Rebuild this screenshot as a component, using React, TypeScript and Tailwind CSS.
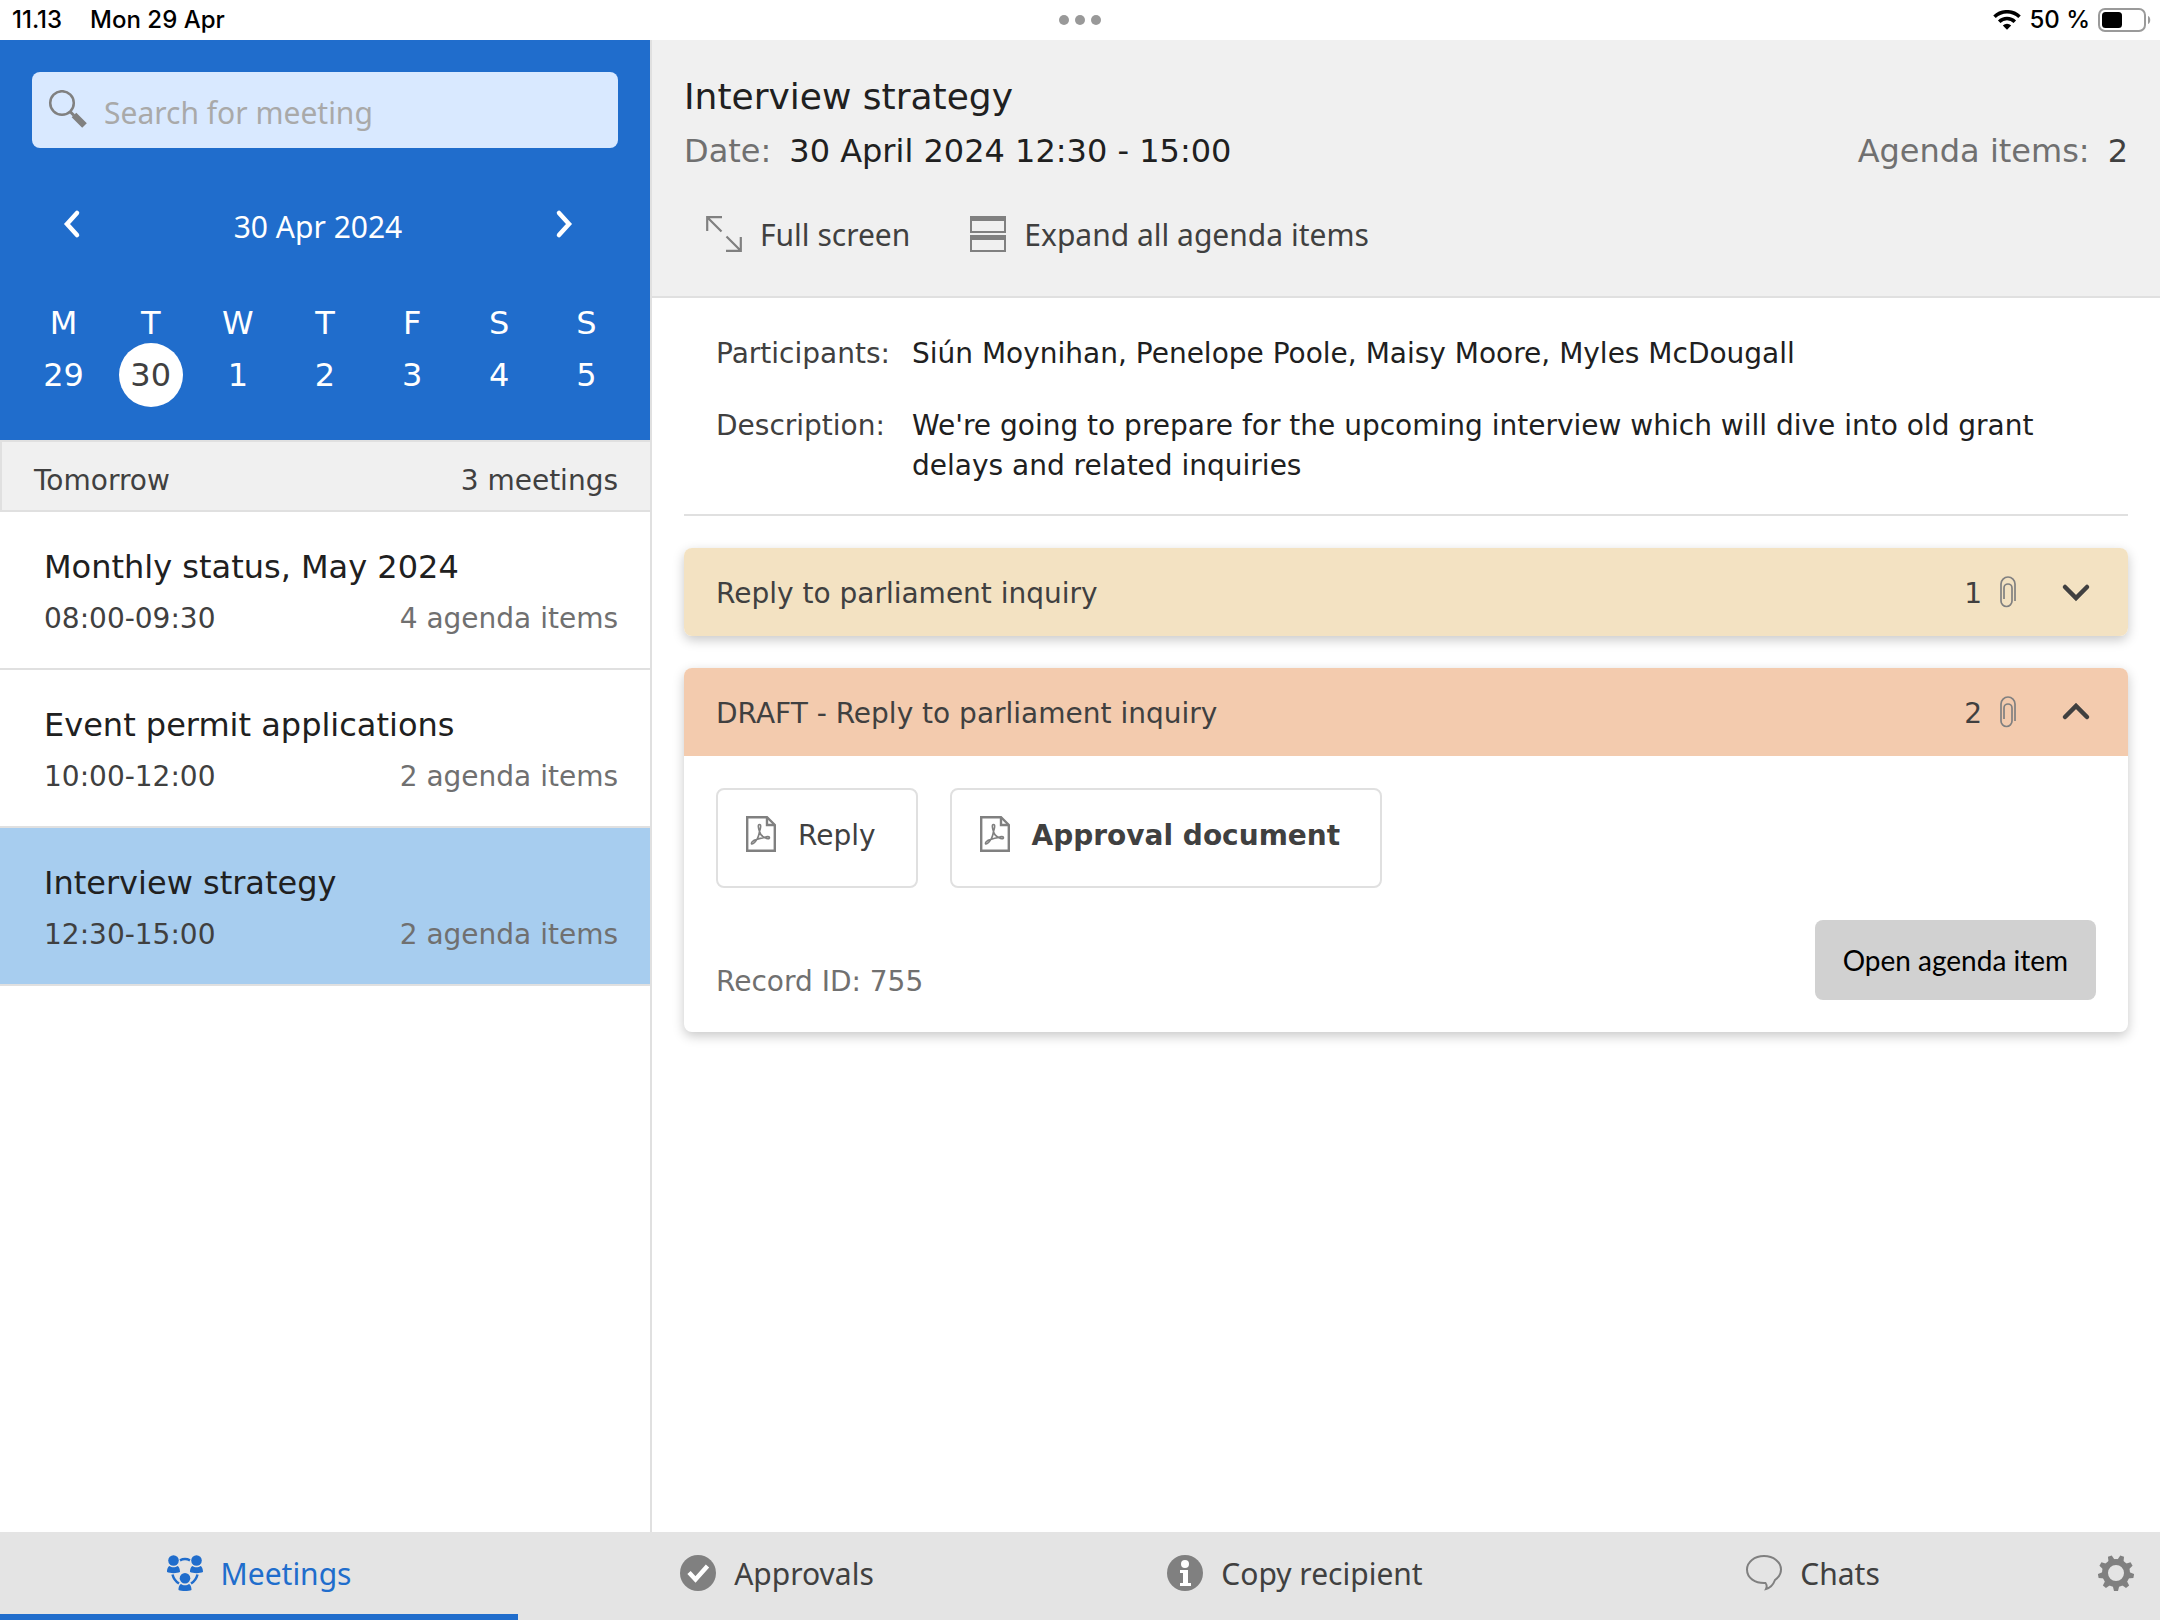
import { ReactNode, useState } from 'react';
import clsx from 'clsx';

const days = [
  { letter: 'M', date: 29 },
  { letter: 'T', date: 30 },
  { letter: 'W', date: 1 },
  { letter: 'T', date: 2 },
  { letter: 'F', date: 3 },
  { letter: 'S', date: 4 },
  { letter: 'S', date: 5 },
];

const meetings = [
  { title: 'Monthly status, May 2024', time: '08:00-09:30', items: 4 },
  { title: 'Event permit applications', time: '10:00-12:00', items: 2 },
  { title: 'Interview strategy', time: '12:30-15:00', items: 2 },
];

const SearchIcon = () => (
  <svg className="h-10 w-10" viewBox="0 0 40 40" fill="none">
    <circle cx="14" cy="13" r="11.800" stroke="#808080" strokeWidth="2.500" />
    <path d="M22 21.500l4 4" stroke="#808080" strokeWidth="3" />
    <path d="M26 25l10.500 10.500" stroke="#808080" strokeWidth="6.500" />
  </svg>
);

const Chevron = ({ d, className }: { d: string; className?: string }) => (
  <svg className={clsx('h-8 w-8', className)} viewBox="0 0 32 32" fill="none">
    <path d={d} stroke="currentColor" strokeWidth="4.500" strokeLinecap="round" />
  </svg>
);

const WifiIcon = () => (
  <svg className="h-5 w-7" viewBox="0 0 28 20" fill="none" stroke="#000">
    <path d="M1.500 6.800a18 18 0 0 1 25 0" strokeWidth="3.600" />
    <path d="M6.200 11.700a11.200 11.200 0 0 1 15.600 0" strokeWidth="3.600" />
    <path d="M9.800 15.500a6 6 0 0 1 8.400 0L14 19.800z" fill="#000" stroke="none" />
  </svg>
);

const BatteryIcon = () => (
  <svg className="h-6 w-[54px]" viewBox="0 0 54 24" fill="none">
    <rect x="1" y="1" width="46" height="22" rx="6" stroke="#9a9a9a" strokeWidth="2" />
    <rect x="4" y="4" width="20" height="16" rx="3.500" fill="#000" />
    <path d="M50 8c3 1 3 7 0 8z" fill="#9a9a9a" />
  </svg>
);

const FullScreenIcon = () => (
  <svg className="size-9" viewBox="0 0 36 36" fill="none" stroke="#808080" strokeWidth="2.200">
    <path d="M16 1.200H1.200V15M1.500 1.500l14 14M20 34.800h14.800V21M34.500 34.500l-14-14" />
  </svg>
);

const ExpandIcon = () => (
  <svg className="size-9" viewBox="0 0 36 36" fill="none">
    <path d="M1 1h34v15H1zM1 20h34v15H1z" stroke="#808080" strokeWidth="2" />
    <path d="M0 0h36v5H0zM0 19h36v5H0z" fill="#808080" />
  </svg>
);

const PdfIcon = () => (
  <svg className="h-9 w-[30px]" viewBox="0 0 30 36" fill="none" stroke="#808080">
    <path d="M1.200 1.200h19.800l7.800 7.800v25.800H1.200z" strokeWidth="2.400" />
    <path d="M21 1.200v7.800h7.800" strokeWidth="2.400" />
    <path
      d="M13.500 15.500c-1-3-2-7 0-7s1 4 0 7c-.5 3-1 6-3 8.500-1.500 2-3.500 4.500-4.800 4-1-.5 1-4 4.800-4.500 3-1.200 6-1.800 8.500-2 2-1.500 4.500-1 4.500.3s-2.500 1.200-4.500-.3c-3-1-5-3.500-5.500-6z"
      strokeWidth="1.600"
    />
  </svg>
);

const ClipIcon = () => (
  <svg className="h-8 w-4" viewBox="0 0 16 32" fill="none" stroke="#808080" strokeWidth="1.700">
    <path d="M15 25V8a7 7 0 0 0-14 0v17a5.500 5.500 0 0 0 11 0V12a4 4 0 0 0-8 0v11" />
  </svg>
);

const MeetingsIcon = () => (
  <svg className="size-9" viewBox="0 0 36 36" fill="currentColor">
    <circle cx="6.500" cy="5.500" r="5.300" />
    <circle cx="29.500" cy="5.500" r="5.300" />
    <circle cx="18" cy="23.300" r="5.300" />
    <path d="M0 17c0-4 1.500-5.500 2.500-6 2 1.800 6 1.800 8 0 1 .5 2.500 2 2.500 6-3 1.500-10 1.500-13 0zM23 17c0-4 1.500-5.500 2.500-6 2 1.800 6 1.800 8 0 1 .5 2.500 2 2.500 6-3 1.500-10 1.500-13 0zM11.500 35c0-4 1.500-5.500 2.500-6 2 1.800 6 1.800 8 0 1 .5 2.500 2 2.500 6-3 1.300-10 1.300-13 0z" />
    <path
      d="M13 5.300q5-2.500 10 0M5.500 19.500q1.500 6 6.500 9M30.500 19.500q-1.500 6-6.500 9"
      fill="none"
      stroke="currentColor"
      strokeWidth="2.500"
    />
  </svg>
);

const ApprovalsIcon = () => (
  <svg className="size-9" viewBox="0 0 36 36">
    <circle cx="18" cy="18" r="18" fill="#808080" />
    <path d="M9 17.500l6.500 7L27.500 11" fill="none" stroke="#fff" strokeWidth="4.500" />
  </svg>
);

const InfoIcon = () => (
  <svg className="size-9" viewBox="0 0 36 36">
    <circle cx="18" cy="18" r="18" fill="#808080" />
    <circle cx="18" cy="9" r="4" fill="#fff" />
    <path d="M13 15h8v13h3v3H13v-3h3V18h-3z" fill="#fff" />
  </svg>
);

const ChatIcon = () => (
  <svg className="size-9" viewBox="0 0 36 36" fill="none" stroke="#808080" strokeWidth="2">
    <path d="M20 34c1-2 1-4-.5-6C9 28.500 1 23 1 14.500 1 7 8.500 1 18 1s17 6 17 13.500c0 5-2.500 8-6 10.500-1.500 4-5 8-9 9z" />
  </svg>
);

const GearIcon = () => (
  <svg className="size-9" viewBox="0 0 36 36" fill="none" stroke="#808080">
    <circle cx="18" cy="18" r="11" strokeWidth="6" />
    {[0, 40, 80, 120, 160, 200, 240, 280, 320].map((angle) => (
      <path
        key={angle}
        d="M14.500 30h7l-1.500 6h-4z"
        fill="#808080"
        stroke="none"
        transform={`rotate(${angle} 18 18)`}
      />
    ))}
  </svg>
);

const tabs = [
  { label: 'Meetings', icon: <MeetingsIcon /> },
  { label: 'Approvals', icon: <ApprovalsIcon /> },
  { label: 'Copy recipient', icon: <InfoIcon /> },
  { label: 'Chats', icon: <ChatIcon /> },
];

const StatusBar = () => (
  <div className="grid h-10 grid-cols-3 items-center bg-white font-['Inter',sans-serif] text-2xl font-medium text-black">
    <div className="flex gap-7 pl-3">
      <span>11.13</span>
      <span>Mon 29 Apr</span>
    </div>
    <div className="flex justify-center gap-1.5">
      <span className="size-2.5 rounded-full bg-[#999]" />
      <span className="size-2.5 rounded-full bg-[#999]" />
      <span className="size-2.5 rounded-full bg-[#999]" />
    </div>
    <div className="flex items-center justify-end gap-2 pr-2">
      <WifiIcon />
      <span>50 %</span>
      <BatteryIcon />
    </div>
  </div>
);

const Sidebar = () => {
  const [day, setDay] = useState(30);
  const [selected, setSelected] = useState(2);

  return (
    <aside className="w-[652px] shrink-0 border-r-2 border-[#e0e0e0]">
      <div className="h-[400px] bg-[#206dcc] pt-8 font-['Noto_Sans',sans-serif] text-white">
        <label className="mx-8 flex h-[76px] items-center gap-4 rounded-lg bg-[#d9e9ff] px-4">
          <SearchIcon />
          <input
            type="text"
            aria-label="Search for meeting"
            placeholder="Search for meeting"
            className="min-w-0 flex-1 bg-transparent pt-1 text-[30px] text-[#404040] outline-none placeholder:text-[#a9a9a9]"
          />
        </label>
        <div className="mt-12 flex h-14 items-center justify-between pr-[70px] pl-14 text-[30px]">
          <button aria-label="Previous day">
            <Chevron d="M21 5L11 16l10 11" />
          </button>
          <span className="pt-1">30 Apr 2024</span>
          <button aria-label="Next day">
            <Chevron d="M11 5l10 11-10 11" />
          </button>
        </div>
        <div className="mt-[51px] grid grid-cols-7 px-5 font-['DejaVu_Sans',sans-serif] text-[32px] leading-10">
          {days.map(({ letter, date }) => (
            <button key={date} onClick={() => setDay(date)} className="flex flex-col items-center">
              <span>{letter}</span>
              <span
                className={clsx(
                  'flex size-16 items-center justify-center rounded-full',
                  day === date && 'bg-white text-[#404040]',
                )}
              >
                {date}
              </span>
            </button>
          ))}
        </div>
      </div>
      <div className="flex h-[72px] items-center justify-between border-2 border-r-0 border-[#e0e0e0] bg-[#f0f0f0] px-8 pt-2.5 text-[28px] text-[#404040]">
        <span>Tomorrow</span>
        <span>3 meetings</span>
      </div>
      <ul>
        {meetings.map(({ title, time, items }, i) => (
          <li key={title}>
            <button
              onClick={() => setSelected(i)}
              className={clsx(
                'flex h-[158px] w-full flex-col border-b-2 border-[#e0e0e0] pt-7 pr-8 pl-11 text-left',
                selected === i && 'bg-[#a7cdef]',
              )}
            >
              <span className="text-[32px] leading-[54px] text-[#202020]">{title}</span>
              <span className="flex w-full justify-between text-[28px] leading-[50px]">
                <span className="text-[#404040]">{time}</span>
                <span className="text-[#707070]">{items} agenda items</span>
              </span>
            </button>
          </li>
        ))}
      </ul>
    </aside>
  );
};

const AgendaCard = ({
  title,
  count,
  open,
  color,
  children,
}: {
  title: string;
  count: number;
  open?: boolean;
  color: string;
  children?: ReactNode;
}) => (
  <section className="mt-8 overflow-hidden rounded-lg bg-white shadow-[0_4px_12px_rgba(0,0,0,0.22)]">
    <button className={clsx('flex h-[88px] w-full items-center pr-9 pl-8 text-[28px] text-[#404040]', color)}>
      <span className="pt-1">{title}</span>
      <span className="mr-[18px] ml-auto pt-1">{count}</span>
      <ClipIcon />
      <Chevron className="ml-11" d={open ? 'M5 21l11-11 11 11' : 'M5 11l11 11 11-11'} />
    </button>
    {children}
  </section>
);

const DocumentButton = ({ label, bold }: { label: string; bold?: boolean }) => (
  <button
    className={clsx(
      'flex h-[100px] items-center gap-[22px] rounded-lg border-2 border-[#e0e0e0] pr-10 pb-2 pl-7 text-[#404040]',
      bold && 'font-bold',
    )}
  >
    <PdfIcon />
    <span className="pt-1">{label}</span>
  </button>
);

const MeetingDetails = () => (
  <main className="min-w-0 flex-1">
    <header className="h-[258px] border-b-2 border-[#e0e0e0] bg-[#f0f0f0] px-8 pt-7">
      <h1 className="text-[36px] leading-[58px] text-[#202020]">Interview strategy</h1>
      <div className="flex justify-between text-[32px] leading-[50px] text-[#707070]">
        <div className="flex gap-[18px]">
          <span>Date:</span>
          <span className="text-[#202020]">30 April 2024 12:30 - 15:00</span>
        </div>
        <div className="flex gap-[18px]">
          <span>Agenda items:</span>
          <span className="text-[#404040]">2</span>
        </div>
      </div>
      <div className="mt-[30px] flex h-14 items-center gap-[60px] px-[22px] font-['Noto_Sans',sans-serif] text-[30px] text-[#404040]">
        <button className="flex items-center gap-[18px]">
          <FullScreenIcon />
          Full screen
        </button>
        <button className="flex items-center gap-[18px]">
          <ExpandIcon />
          Expand all agenda items
        </button>
      </div>
    </header>
    <div className="px-8">
      <dl className="grid grid-cols-[196px_1fr] gap-y-8 border-b-2 border-[#e0e0e0] px-8 pt-9 pb-7 text-[28px] leading-10">
        <dt className="text-[#404040]">Participants:</dt>
        <dd className="text-[#202020]">Siún Moynihan, Penelope Poole, Maisy Moore, Myles McDougall</dd>
        <dt className="text-[#404040]">Description:</dt>
        <dd className="text-[#202020]">
          We're going to prepare for the upcoming interview which will dive into old grant delays and related inquiries
        </dd>
      </dl>
      <AgendaCard title="Reply to parliament inquiry" count={1} color="bg-[#f3e2c2]" />
      <AgendaCard title="DRAFT - Reply to parliament inquiry" count={2} color="bg-[#f3cbae]" open>
        <div className="p-8 text-[28px]">
          <div className="flex gap-8">
            <DocumentButton label="Reply" />
            <DocumentButton label="Approval document" bold />
          </div>
          <div className="mt-8 flex h-20 items-end justify-between">
            <span className="leading-9 text-[#707070]">Record ID: 755</span>
            <button className="h-20 rounded-lg bg-[#d1d1d1] px-7 font-['Lato',sans-serif] text-black">
              Open agenda item
            </button>
          </div>
        </div>
      </AgendaCard>
    </div>
  </main>
);

const App = () => {
  const [tab, setTab] = useState('Meetings');

  return (
    <div className="flex min-h-screen flex-col bg-white font-['DejaVu_Sans',Verdana,sans-serif]">
      <StatusBar />
      <div className="flex flex-1">
        <Sidebar />
        <MeetingDetails />
      </div>
      <nav className="flex h-[88px] bg-[#e4e4e4] font-['Noto_Sans',sans-serif] text-[30px] text-[#404040]">
        {tabs.map(({ label, icon }) => (
          <button
            key={label}
            onClick={() => setTab(label)}
            className={clsx(
              'flex flex-1 items-center justify-center gap-[18px] border-b-6',
              tab === label ? 'border-[#206dcc] text-[#206dcc]' : 'border-transparent',
            )}
          >
            {icon}
            {label}
          </button>
        ))}
        <button aria-label="Settings" className="flex w-[88px] items-center justify-center border-b-6 border-transparent">
          <GearIcon />
        </button>
      </nav>
    </div>
  );
};

export default App;
